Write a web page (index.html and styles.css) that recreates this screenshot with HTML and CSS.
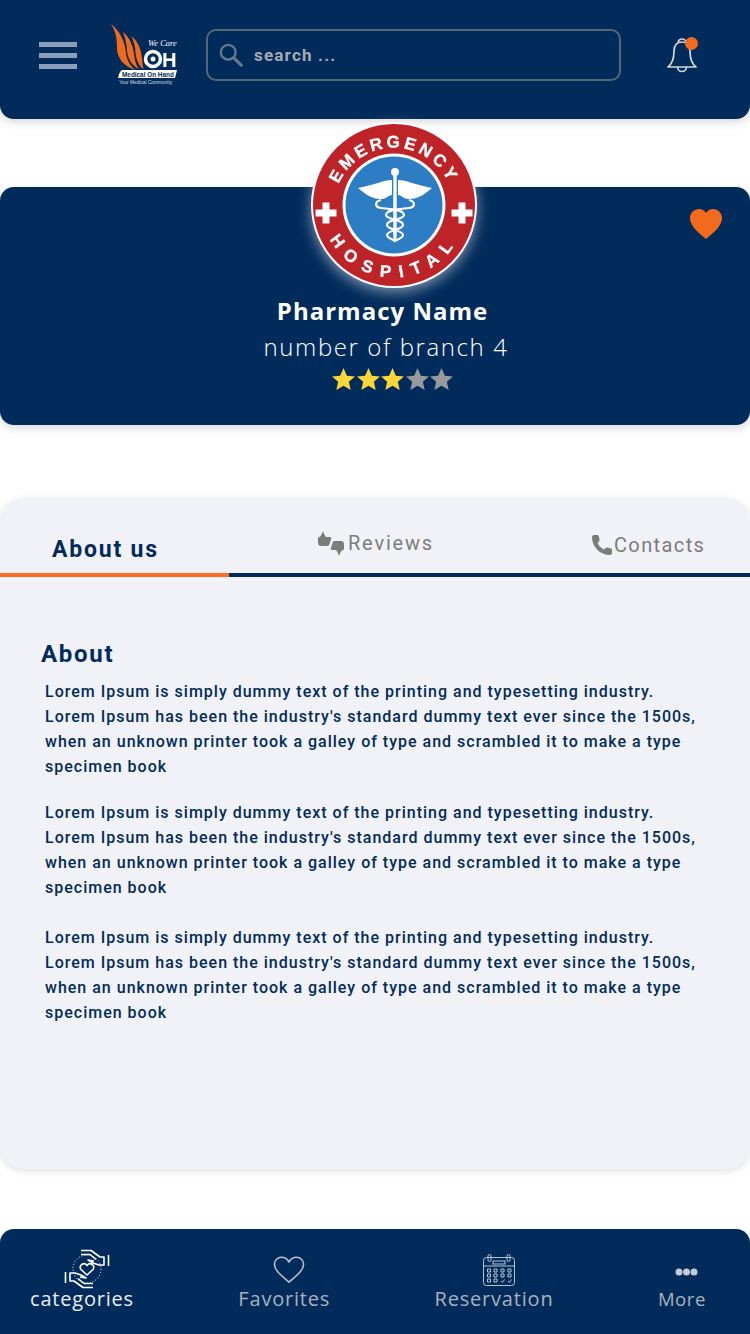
FILE: index.html
```html
<!DOCTYPE html>
<html lang="en">
<head>
	<meta charset="UTF-8">
	<title>Pharmacy</title>
	<link rel="stylesheet" href="styles.css">
</head>
<body>

	<header class="topbar">
		<div class="menu-btn"><span></span><span></span><span></span></div>
		<svg class="brand" viewBox="0 0 68 62">
			<path d="M0 0C9 7 14 18 15 29c1 8 4 13 10 17C13 43 6 34 6 24 6 15 5 8 0 0z" fill="#f26a1b"/>
			<path d="M12 8c6 5 10 13 11 22 1 7 2 11 5 15-7-3-11-10-12-18 0-7-2-13-4-19z" fill="#f26a1b"/>
			<path d="M20.500 12c5 4 9 11 10 19 1 6 1 10 2 14-5-3-7-9-8-16 0-6-2-12-4-17z" fill="#f26a1b"/>
			<text class="brand-care" x="37" y="22">We Care</text>
			<circle cx="42" cy="35" r="7.500" fill="none" stroke="#fff" stroke-width="3.500"/>
			<circle cx="42" cy="35" r="2.500" fill="#fff"/>
			<text class="brand-oh" x="51" y="43">H</text>
			<path d="M11 46h55l-2 8H7q1-6 4-8z" fill="#fff"/>
			<text class="brand-hand" x="11" y="52.500">Medical On Hand</text>
			<text class="brand-tag" x="8" y="60">Your Medical Community</text>
		</svg>
		<div class="search">
			<svg class="search-icon" viewBox="0 0 26 26"><circle cx="10" cy="10" r="8" fill="none" stroke="#66788f" stroke-width="2.600"/><path d="M16 16l8 8" stroke="#66788f" stroke-width="3.400" stroke-linecap="round"/></svg>
			<span>search ...</span>
		</div>
		<div class="bell">
			<svg viewBox="0 0 30 38"><g fill="none" stroke="#d4d6d8" stroke-width="1.700"><path d="M11 7a4 4 0 0 1 8 0"/><path d="M15 6c-5 0-8 3-8 9 0 7-2 13-6 16h28c-4-3-6-9-6-16 0-6-3-9-8-9z" stroke-linejoin="round"/><path d="M10.500 31a4.500 4.500 0 0 0 9 0"/></g></svg>
			<span class="bell-dot"></span>
		</div>
	</header>

	<section class="hero">
		<svg class="badge" viewBox="0 0 172 172">
			<defs>
				<path id="arc-top" d="M28 104A60 60 0 1 1 144 104"/>
				<path id="arc-bottom" d="M18 112A73 73 0 0 0 154 112"/>
			</defs>
			<circle cx="86" cy="86" r="83" fill="#fff"/>
			<circle cx="86" cy="86" r="81" fill="#bd2327"/>
			<circle cx="86" cy="86" r="51.500" fill="#fff"/>
			<circle cx="86" cy="86" r="48.500" fill="#2c7dc3"/>
			<text class="badge-text badge-top"><textPath href="#arc-top" startOffset="50%" text-anchor="middle">EMERGENCY</textPath></text>
			<text class="badge-text badge-bottom"><textPath href="#arc-bottom" startOffset="50%" text-anchor="middle">HOSPITAL</textPath></text>
			<path d="M7.500 90.500h7v-7h7v7h7v7h-7v7h-7v-7h-7zM143.500 90.500h7v-7h7v7h7v7h-7v7h-7v-7h-7z" fill="#fff"/>
			<circle cx="87" cy="53" r="4" fill="#fff"/>
			<path d="M85.300 56h3.400v62l-1.700 6-1.700-6z" fill="#fff"/>
			<path d="M50 69c8-2 14-3 20-5 5-2 10-3 14-3v15c-3 0-5 3-9 4-10 1-18-5-25-11zM124 69c-8-2-14-3-20-5-5-2-10-3-14-3v15c3 0 5 3 9 4 10 1 18-5 25-11z" fill="#fff"/>
			<path d="M73 81c-6 1-7 7 0 8 8 1 22 1 23 7 0 5-17 4-17 10 0 5 16 5 16 10 0 3-5 4-8 6M101 81c6 1 7 7 0 8-8 1-22 1-23 7 0 5 17 4 17 10 0 5-16 5-16 10 0 3 5 4 8 6" fill="none" stroke="#fff" stroke-width="2.200"/>
		</svg>
		<svg class="fav" viewBox="0 0 32 30"><path d="M16 30C6 22 0 16 0 9 0 4 4 0 9 0c3 0 5 1 7 4 2-3 4-4 7-4 5 0 9 4 9 9 0 7-6 13-16 21z" fill="#f26a1b"/></svg>
		<h2 class="hero-name">Pharmacy Name</h2>
		<p class="hero-branch">number of branch 4</p>
		<div class="stars">
			<svg viewBox="0 0 24 23"><path class="star-on" d="M12 0l3.500 8 8.500.8-6.400 5.700 1.900 8.500L12 18.500 4.500 23l1.900-8.500L0 8.800 8.500 8z"/></svg>
			<svg viewBox="0 0 24 23"><path class="star-on" d="M12 0l3.500 8 8.500.8-6.400 5.700 1.900 8.500L12 18.500 4.500 23l1.900-8.500L0 8.800 8.500 8z"/></svg>
			<svg viewBox="0 0 24 23"><path class="star-on" d="M12 0l3.500 8 8.500.8-6.400 5.700 1.900 8.500L12 18.500 4.500 23l1.900-8.500L0 8.800 8.500 8z"/></svg>
			<svg viewBox="0 0 24 23"><path class="star-off" d="M12 0l3.500 8 8.500.8-6.400 5.700 1.900 8.500L12 18.500 4.500 23l1.900-8.500L0 8.800 8.500 8z"/></svg>
			<svg viewBox="0 0 24 23"><path class="star-off" d="M12 0l3.500 8 8.500.8-6.400 5.700 1.900 8.500L12 18.500 4.500 23l1.900-8.500L0 8.800 8.500 8z"/></svg>
		</div>
	</section>

	<section class="panel">
		<div class="tabs">
			<div class="tab active">About us</div>
			<div class="tab reviews">
				<svg viewBox="0 0 26 25"><g fill="#7c7c7c"><path d="M5 0c1 3 2 5 3 6h4c1 0 1.500.8 1.200 1.500L11.500 13c-.3 1-1 2-2 2H3c-1.700 0-3-1.300-3-3V7.500C0 6.500.8 6 1.500 6 3 5 4 3 5 0z"/><path d="M5 0c1 3 2 5 3 6h4c1 0 1.500.8 1.200 1.500L11.500 13c-.3 1-1 2-2 2H3c-1.700 0-3-1.300-3-3V7.500C0 6.500.8 6 1.500 6 3 5 4 3 5 0z" transform="rotate(180 13 12.500)"/></g></svg>
				<span>Reviews</span>
			</div>
			<div class="tab contacts">
				<svg viewBox="0 0 22 22"><path d="M1 3c0-1 1-2 2-2l3 0c1 0 1.500 .5 1.800 1.500l.7 3c.2 1 0 1.500-.7 2.200L6.500 9c1.500 3 3.500 5 6.500 6.500l1.300-1.300c.7-.7 1.300-.9 2.200-.7l3 .7c1 .3 1.500.8 1.500 1.800v3c0 1-1 2-2 2C9 21 1 13 1 3z" fill="#7c7c7c"/></svg>
				<span>Contacts</span>
			</div>
		</div>
		<div class="about">
			<h3>About</h3>
			<p>Lorem Ipsum is simply dummy text of the printing and typesetting industry.<br>Lorem Ipsum has been the industry's standard dummy text ever since the 1500s,<br>when an unknown printer took a galley of type and scrambled it to make a type<br>specimen book</p>
			<p class="second">Lorem Ipsum is simply dummy text of the printing and typesetting industry.<br>Lorem Ipsum has been the industry's standard dummy text ever since the 1500s,<br>when an unknown printer took a galley of type and scrambled it to make a type<br>specimen book</p>
			<p>Lorem Ipsum is simply dummy text of the printing and typesetting industry.<br>Lorem Ipsum has been the industry's standard dummy text ever since the 1500s,<br>when an unknown printer took a galley of type and scrambled it to make a type<br>specimen book</p>
		</div>
	</section>

	<nav class="bottom-nav">
		<a class="nav-item current">
			<svg class="ic-care" viewBox="0 0 46 40"><g fill="none" stroke="#fff" stroke-width="1.600" stroke-linejoin="round">
				<path d="M17 1.500h10l9 6.500h4v8h-5l-6-2-5-3 6 1M17 5.500h9l6 5M40 8v8M44.500 6v11"/>
				<path d="M17 1.500h10l9 6.500h4v8h-5l-6-2-5-3 6 1M17 5.500h9l6 5M40 8v8M44.500 6v11" transform="rotate(180 23 20)"/>
				<path d="M23 26l-6-5.500c-3-4 3-8 6-4 3-4 9 0 6 4z"/>
				<circle cx="23" cy="20" r="14" stroke-width="1" stroke-dasharray="1 2"/>
			</g></svg>
			<span>categories</span>
		</a>
		<a class="nav-item">
			<svg class="ic-heart" viewBox="0 0 34 30"><path d="M17 28C8 20 1.500 15 1.500 9 1.500 4.500 5 1.500 9 1.500c3.500 0 6 1.500 8 5 2-3.500 4.500-5 8-5 4 0 7.500 3 7.500 7.500 0 6-6.500 11-15.500 19z" fill="none" stroke="#b9bfc7" stroke-width="1.700" stroke-linejoin="round"/></svg>
			<span>Favorites</span>
		</a>
		<a class="nav-item">
			<svg class="ic-cal" viewBox="0 0 32 32"><g fill="none" stroke="#b9c3cf" stroke-width="1"><rect x=".5" y="3.500" width="31" height="28" rx="3"/><rect x="5" y=".5" width="3" height="7" rx="1.500"/><rect x="24" y=".5" width="3" height="7" rx="1.500"/><path d="M.5 12h31"/><rect x="10" y="7" width="12" height="3"/><path d="M4.500 15h3v3h-3zM11 15h3v3h-3zM18 15h3v3h-3zM25 15h3v3h-3zM4.500 20h3v3h-3zM11 20h3v3h-3zM18 20h3v3h-3zM25 20h3v3h-3zM4.500 25h3v3h-3zM11 25h3v3h-3zM18 27l1.500 1.500 2-3M25 27l1.500 1.500 2-3"/></g></svg>
			<span>Reservation</span>
		</a>
		<a class="nav-item more">
			<svg class="ic-more" viewBox="0 0 23 8"><circle cx="4" cy="4" r="3.500"/><circle cx="11.500" cy="4" r="3.500"/><circle cx="19" cy="4" r="3.500"/></svg>
			<span>More</span>
		</a>
	</nav>

</body>
</html>
```

FILE: styles.css
```css
body {
	margin: 0;
	background-color: #fff;
	font-family: Roboto, sans-serif;
	color: #012b5b;
}

/* top bar */
.topbar {
	display: flex;
	align-items: center;
	height: 119px;
	padding: 0 53px 9px 39px;
	box-sizing: border-box;
	background-color: #012b5b;
	border-radius: 0 0 14px 14px;
	box-shadow: 0 3px 10px rgba(0, 0, 0, 0.16);
}
.menu-btn {
	display: flex;
	flex-direction: column;
	gap: 6px;
	width: 38px;
}
.menu-btn span {
	height: 5px;
	background-color: #8a9fbc;
}
.brand {
	width: 68px;
	height: 62px;
	margin: 0 27px 0 34px;
}
.brand-care {
	font: italic 8.500px "Liberation Serif", serif;
	fill: #fff;
}
.brand-oh {
	font: bold 20px "Liberation Sans", sans-serif;
	fill: #fff;
}
.brand-hand {
	font: bold 6.400px "Liberation Sans", sans-serif;
	fill: #012b5b;
}
.brand-tag {
	font: 4.800px "Liberation Sans", sans-serif;
	fill: #d8dee6;
}
.search {
	display: flex;
	align-items: center;
	gap: 11px;
	width: 415px;
	height: 52px;
	padding-left: 11px;
	box-sizing: border-box;
	border: 2px solid #56677c;
	border-radius: 10px;
	color: #a7abb0;
	font-size: 17px;
	font-weight: 700;
	letter-spacing: 1.200px;
}
.search-icon {
	width: 24px;
	height: 24px;
}
.bell {
	position: relative;
	width: 30px;
	height: 38px;
	margin-left: auto;
}
.bell svg {
	display: block;
	width: 30px;
	height: 38px;
}
.bell-dot {
	position: absolute;
	top: 1px;
	right: -1px;
	width: 13px;
	height: 13px;
	border-radius: 50%;
	background-color: #f26a1b;
}

/* pharmacy card */
.hero {
	position: relative;
	display: flex;
	flex-direction: column;
	align-items: center;
	height: 238px;
	margin-top: 68px;
	padding-top: 108px;
	box-sizing: border-box;
	background-color: #012b5b;
	border-radius: 14px;
	box-shadow: 0 3px 10px rgba(0, 0, 0, 0.16);
	color: #fff;
}
.badge {
	position: absolute;
	top: -68px;
	left: 308px;
	width: 172px;
	height: 172px;
	filter: drop-shadow(0 4px 7px rgba(255, 255, 255, 0.5));
}
.badge-text {
	font: bold 17px "Liberation Sans", sans-serif;
	fill: #fff;
	stroke: #fff;
	stroke-width: 0.3px;
}
.badge-top {
	letter-spacing: 3.400px;
}
.badge-bottom {
	letter-spacing: 9px;
}
.fav {
	position: absolute;
	top: 22px;
	right: 28px;
	width: 32px;
	height: 30px;
}
.hero-name {
	margin: 0 0 0 15px;
	font-family: "Open Sans", sans-serif;
	font-size: 24px;
	font-weight: 700;
	line-height: 32px;
	letter-spacing: 1px;
}
.hero-branch {
	margin: 4px 0 0 22px;
	font-family: "Open Sans", sans-serif;
	font-size: 24px;
	font-weight: 300;
	line-height: 32px;
	letter-spacing: 1.600px;
}
.stars {
	display: flex;
	gap: 1.500px;
	margin: 5px 0 0 35px;
}
.stars svg {
	width: 23px;
	height: 22px;
}
.star-on {
	fill: #fdd73a;
}
.star-off {
	fill: #97999c;
}

/* about panel */
.panel {
	height: 671px;
	margin-top: 73px;
	background-color: #f1f2f7;
	border-radius: 24px;
	box-shadow: 0 2px 8px rgba(0, 0, 0, 0.12);
}
.tabs {
	display: flex;
	height: 79px;
	box-sizing: border-box;
	border-bottom: 4px solid #012b5b;
}
.tab {
	display: flex;
	align-items: center;
	gap: 4px;
	color: #7c7c7c;
	font-size: 20px;
	letter-spacing: 1.800px;
}
.tab.active {
	width: 229px;
	height: 79px;
	padding: 27px 0 0 52px;
	box-sizing: border-box;
	border-bottom: 4px solid #ff6b26;
	color: #012b5b;
	font-size: 23px;
	font-weight: 700;
}
.reviews {
	margin: 15px 0 0 89px;
}
.reviews svg {
	width: 26px;
	height: 25px;
}
.contacts {
	gap: 1px;
	margin: 19px 0 0 157px;
	letter-spacing: 1.400px;
}
.contacts svg {
	width: 22px;
	height: 22px;
}
.about {
	padding: 62px 0 0 45px;
}
.about h3 {
	margin: 0 0 10px -4px;
	font-size: 24px;
	font-weight: 700;
	line-height: 30px;
	letter-spacing: 1.700px;
}
.about p {
	margin: 0 0 21px;
	font-size: 16px;
	font-weight: 500;
	line-height: 25px;
	letter-spacing: 1px;
	white-space: nowrap;
}
.about p.second {
	margin-bottom: 25px;
}

/* bottom nav */
.bottom-nav {
	display: flex;
	justify-content: space-between;
	height: 105px;
	margin-top: 60px;
	padding: 20px 44px 0 30px;
	box-sizing: border-box;
	background-color: #012b5b;
	border-radius: 14px 14px 0 0;
}
.nav-item {
	display: flex;
	flex-direction: column;
	align-items: center;
	justify-content: flex-end;
	height: 62px;
	color: #a8b2be;
	font-family: "Open Sans", sans-serif;
	font-size: 20px;
	line-height: 24px;
	letter-spacing: 0.800px;
}
.nav-item.current {
	color: #e9eef3;
}
.nav-item.more {
	font-size: 18.500px;
	letter-spacing: 0.600px;
}
.ic-care {
	width: 46px;
	height: 40px;
	margin: 0 0 -2px 10px;
}
.ic-heart {
	width: 32px;
	height: 30px;
	margin: 0 0 2px 10px;
}
.ic-cal {
	width: 32px;
	height: 32px;
	margin: 0 0 1px 10px;
}
.ic-more {
	width: 23px;
	height: 8px;
	margin: 0 0 11px 10px;
	fill: #c5ccd5;
}
```
